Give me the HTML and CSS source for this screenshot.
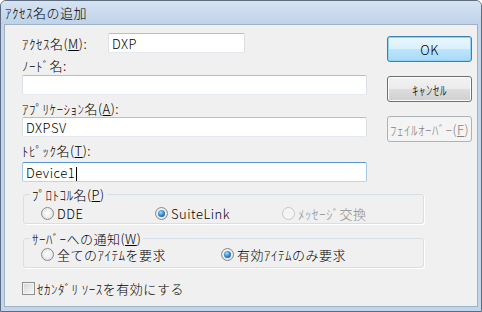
FILE: index.html
```html
<!DOCTYPE html>
<html lang="ja">
<head>
    <meta charset="UTF-8">
    <title>ｱｸｾｽ名の追加</title>
    <link rel="stylesheet" href="styles.css">
</head>
<body>
    <div class="window">
        <div class="titlebar">ｱｸｾｽ名の追加</div>
        <div class="client">
            <div class="top">
                <div class="fields">
                    <div class="row-inline">
                        <span class="lbl-inline">ｱｸｾｽ名(<u>M</u>):</span>
                        <div class="textbox short">DXP</div>
                    </div>
                    <div class="lbl first">ﾉｰﾄﾞ名:</div>
                    <div class="textbox"></div>
                    <div class="lbl">ｱﾌﾟﾘｹｰｼｮﾝ名(<u>A</u>):</div>
                    <div class="textbox">DXPSV</div>
                    <div class="lbl">ﾄﾋﾟｯｸ名(<u>T</u>):</div>
                    <div class="textbox focus topic">Device1<span class="caret"></span></div>
                </div>
                <div class="side">
                    <button class="btn default">OK</button>
                    <button class="btn">ｷｬﾝｾﾙ</button>
                    <button class="btn" disabled>ﾌｪｲﾙｵｰﾊﾞｰ(<u>F</u>)</button>
                </div>
            </div>

            <fieldset class="group proto">
                <legend>ﾌﾟﾛﾄｺﾙ名(<u>P</u>)</legend>
                <div class="opts">
                    <span class="opt w1"><i class="radio"></i>DDE</span>
                    <span class="opt w2"><i class="radio on"></i>SuiteLink</span>
                    <span class="opt off"><i class="radio"></i>ﾒｯｾｰｼﾞ交換</span>
                </div>
            </fieldset>

            <fieldset class="group notify">
                <legend>ｻｰﾊﾞｰへの通知(<u>W</u>)</legend>
                <div class="opts">
                    <span class="opt w3"><i class="radio"></i>全てのｱｲﾃﾑを要求</span>
                    <span class="opt"><i class="radio on"></i>有効ｱｲﾃﾑのみ要求</span>
                </div>
            </fieldset>

            <div class="check"><i class="box"></i>ｾｶﾝﾀﾞﾘ ｿｰｽを有効にする</div>
        </div>
    </div>
</body>
</html>
```

FILE: styles.css
```css
body {
    margin: 0;
    padding: 0;
    background: #ffffff;
    font-family: "Noto Sans CJK JP", sans-serif;
    font-size: 13px;
    font-weight: 300;
    letter-spacing: 0.5px;
    color: #000;
}

.window {
    width: 482px;
    height: 312px;
    box-sizing: border-box;
    border: 1px solid #5d6d80;
    border-radius: 6px 6px 0 0;
    background: #c3d5ea;
    padding: 0 3px 4px 3px;
    display: flex;
    flex-direction: column;
}

.titlebar {
    height: 23px;
    line-height: 24px;
    background: linear-gradient(#d6e3f2, #bfd2e9);
    border-radius: 5px 5px 0 0;
    margin: 0 -3px;
    padding-left: 4px;
}

.client {
    flex: 1;
    background: #f0f0f0;
    border: 1px solid #9fb1c6;
    padding: 8px 5px 0 17px;
}

.top {
    display: flex;
    align-items: flex-start;
    justify-content: space-between;
}

.fields {
    width: 345px;
}

.row-inline {
    display: flex;
    align-items: center;
}

.lbl-inline {
    width: 86px;
}

.lbl {
    height: 15px;
    line-height: 15px;
    margin-top: 6px;
    margin-bottom: 1px;
}

.lbl.first {
    margin-top: 5px;
    margin-bottom: 2px;
}

.textbox {
    height: 20px;
    line-height: 19px;
    box-sizing: border-box;
    background: #fff;
    border: 1px solid;
    border-color: #b9bdc4 #dbdfe6 #e3e9ef #dbdfe6;
    border-radius: 2px;
    padding-left: 3px;
}

.textbox.short {
    width: 137px;
}

.textbox.topic {
    margin-top: 4px;
}

.textbox.focus {
    border-color: #5a96cf #a4c9e3 #b7d9ed #a4c9e3;
}

.caret {
    display: inline-block;
    width: 1px;
    height: 14px;
    background: #000;
    vertical-align: -3px;
    margin-left: 1px;
}

.side {
    width: 85px;
    margin-top: 3px;
    display: flex;
    flex-direction: column;
    gap: 14px;
}

.btn {
    height: 26px;
    padding: 0;
    font-family: "Noto Sans CJK JP", sans-serif;
    font-size: 13px;
    font-weight: 300;
    letter-spacing: 0.5px;
    color: #000;
    border: 1px solid #707070;
    border-radius: 3px;
    background: linear-gradient(#f2f2f2 0, #ebebeb 50%, #dddddd 50%, #cfcfcf 100%);
    box-shadow: inset 0 0 0 1px #fcfcfc;
}

.btn.default {
    border-color: #3c7fb1;
    background: linear-gradient(#eaf6fd 0, #d9f0fc 50%, #bee6fd 50%, #a7d9f5 100%);
    box-shadow: inset 0 0 0 1px #8fd3f5;
}

.btn:disabled {
    border-color: #adb2b5;
    background: #f4f4f4;
    box-shadow: none;
    color: #838383;
}

.group {
    width: 401px;
    box-sizing: border-box;
    margin: 0 0 0 1px;
    border: 1px solid #d5dfe5;
    border-radius: 3px;
    box-shadow: 1px 1px 0 #fff;
    padding: 4px 0 2px 6px;
}

.group legend {
    padding: 0 2px;
    line-height: 15px;
}

.proto {
    margin-top: 5px;
}

.notify {
    margin-top: 7px;
    padding-top: 1px;
    padding-bottom: 5px;
}

.opts {
    display: flex;
    padding-left: 11px;
    line-height: 15px;
}

.opt {
    display: flex;
    align-items: center;
}

.opt.w1 { width: 114px; }
.opt.w2 { width: 127px; }
.opt.w3 { width: 180px; }

.opt.off {
    color: #8d8d8d;
}

.radio {
    width: 11px;
    height: 11px;
    border: 1px solid #8a8a8a;
    border-radius: 50%;
    background: radial-gradient(circle at 50% 45%, #ffffff 0, #ececec 55%, #cfcfcf 100%);
    margin-right: 3px;
    position: relative;
}

.radio.on::after {
    content: "";
    position: absolute;
    left: 2px;
    top: 2px;
    width: 7px;
    height: 7px;
    border-radius: 50%;
    background: radial-gradient(circle at 40% 35%, #a9dcf7 0, #3a8fd0 45%, #0f3f77 100%);
}

.opt.off .radio {
    border-color: #c6c6c6;
    background: #f4f4f4;
}

.check {
    display: flex;
    align-items: center;
    margin-top: 13px;
    line-height: 15px;
}

.box {
    width: 11px;
    height: 11px;
    border: 1px solid #8f8f8f;
    background: linear-gradient(135deg, #d6d6d6, #f8f8f8);
    box-shadow: inset 0 0 0 1px #f4f4f4;
    margin-right: 2px;
}
```
